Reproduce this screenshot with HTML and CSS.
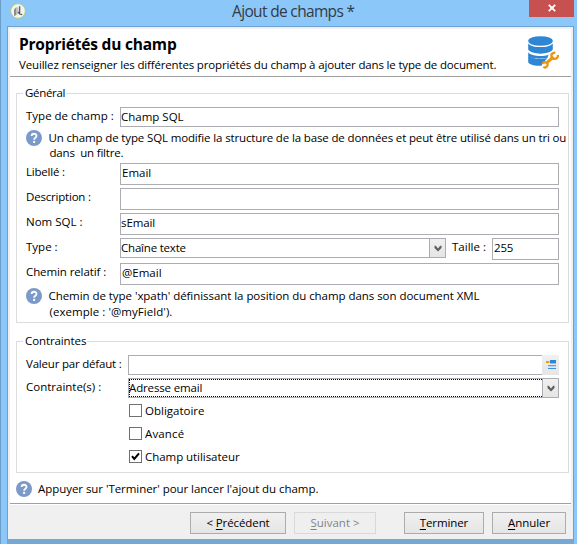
FILE: index.html
```html
<!DOCTYPE html>
<html lang="fr">
<head>
<meta charset="utf-8">
<title>Ajout de champs</title>
<link rel="stylesheet" href="styles.css">
</head>
<body>
<svg width="0" height="0" class="defs">
  <symbol id="help" viewBox="0 0 16 16">
    <circle cx="8" cy="8" r="8" fill="#7b9aca"/>
    <path d="M5.6 6.1C5.6 3 10.5 3 10.5 5.9C10.5 7.7 8.1 7.7 8.1 9.7" fill="none" stroke="#fff" stroke-width="1.8"/>
    <rect x="7.1" y="10.9" width="2" height="2" fill="#fff"/>
  </symbol>
  <symbol id="chevron" viewBox="0 0 8 7">
    <path d="M0.5 0.8H1.8L4 3.4L6.2 0.8H7.5V3L4 6.4L0.5 3Z" fill="#606060"/>
  </symbol>
</svg>
<div class="window">
  <div class="titlebar">
    <svg class="app-icon" viewBox="0 0 16 16">
      <circle cx="8" cy="8" r="7.4" fill="#f2f4f1" stroke="#a9c97e" stroke-width="1"/>
      <path d="M4 6.5L6.5 4V12L4 13Z" fill="#8b8d8b"/>
      <path d="M6.5 5L8.5 4V9L7 12Z" fill="#c2c4c2"/>
      <path d="M9.7 3.2V10.2M8 9L9.7 11L12.2 11.6" fill="none" stroke="#555" stroke-width="1.2"/>
    </svg>
    <h1 class="title">Ajout de champs *</h1>
    <div class="close"><svg viewBox="0 0 8 8"><path d="M0.8 0.8L7.2 7.2M7.2 0.8L0.8 7.2" stroke="#fff" stroke-width="1.8"/></svg></div>
  </div>
  <div class="client">
    <div class="page">
      <header class="header">
        <div>
          <h2>Propriétés du champ</h2>
          <p class="intro">Veuillez renseigner les différentes propriétés du champ à ajouter dans le type de document.</p>
        </div>
        <svg class="db-icon" viewBox="0 0 31 33">
          <g fill="#2f86d3">
            <ellipse cx="12.5" cy="5" rx="12.3" ry="4.8"/>
            <path d="M0.2 7.4C3.5 12.3 21.5 12.3 24.8 7.4V13.6C21.5 19 3.5 19 0.2 13.6Z"/>
            <path d="M0.2 16.2C3.5 21.3 21.5 21.3 24.8 16.2V17C21 17.5 19.5 20 20 21.5C14 23.5 3 23 0.2 19.6Z"/>
            <path d="M0.2 19C4 23 12 23.8 19.5 22L14 28.2V29.5C8 30.2 1.5 29 0.2 26.2Z"/>
          </g>
          <path d="M0.2 16.2" />
          <path d="M19 26.5L25.5 20.8" stroke="#ef950f" stroke-width="3"/>
          <path d="M27.4 16.6C23 16.2 21.8 22.2 26 22.8C28.8 23 30.2 21.4 29.8 19" fill="none" stroke="#ef950f" stroke-width="2.3"/>
          <path d="M14.4 27.8C16.2 25.2 20 26.2 19.6 29C19.2 31.6 16.6 32 15.4 30.8" fill="none" stroke="#ef950f" stroke-width="2.3"/>
        </svg>
      </header>
      <main class="content">
        <section class="group general">
          <h3 class="legend t-n3">Général</h3>
          <div class="row short first"><label class="label">Type de champ :</label><div class="field">Champ SQL</div></div>
          <div class="hint">
            <svg class="help"><use href="#help"/></svg>
            <p class="t-n14">Un champ de type SQL modifie la structure de la base de données et peut être utilisé dans un tri ou<br><span class="l2 t-n2">dans &nbsp;un filtre.</span></p>
          </div>
          <div class="row"><label class="label t-n2">Libellé :</label><div class="field pad">Email</div></div>
          <div class="row"><label class="label t-n2">Description :</label><div class="field pad"></div></div>
          <div class="row"><label class="label">Nom SQL :</label><div class="field t-n1">sEmail</div></div>
          <div class="row">
            <label class="label">Type :</label>
            <div class="field combo t-n2"><span>Chaîne texte</span><span class="drop"><svg><use href="#chevron"/></svg></span></div>
            <label class="size-label">Taille :</label>
            <div class="field size t-n2">255</div>
          </div>
          <div class="row"><label class="label t-n1">Chemin relatif :</label><div class="field pad">@Email</div></div>
          <div class="hint tall">
            <svg class="help"><use href="#help"/></svg>
            <p class="t-n05">Chemin de type 'xpath' définissant la position du champ dans son document XML<br><span class="l2 t-0">(exemple : '@myField').</span></p>
          </div>
        </section>
        <section class="group constraints">
          <h3 class="legend t-n1">Contraintes</h3>
          <div class="row short first"><label class="label t-n2">Valeur par défaut :</label><div class="field open"></div>
            <span class="picker"><svg viewBox="0 0 10 9"><path d="M4 0H10V3H4Z" fill="#2f86d3"/><path d="M4 3H10V4H4Z" fill="#8dbdf0"/><path d="M2 5H10V6H2Z" fill="#5aa2e6"/><path d="M2 6H10V7H2Z" fill="#b5d6f6"/><path d="M2 8H10V9H2Z" fill="#3f8fd4"/><path d="M0 1H3V3H0Z" fill="#f09a10"/><path d="M3 1H4V3H3Z" fill="#f8cf8c"/></svg></span></div>
          <div class="row short"><label class="label">Contrainte(s) :</label>
            <div class="field combo focus t-n14"><span class="sel">Adresse email</span><span class="drop"><svg><use href="#chevron"/></svg></span></div></div>
          <div class="checks">
            <label class="check"><span class="box"></span><span>Obligatoire</span></label>
            <label class="check"><span class="box"></span><span class="t-p15">Avancé</span></label>
            <label class="check"><span class="box"><svg viewBox="0 0 11 11"><path d="M2 5.2L4.3 8L9 2.4" fill="none" stroke="#000" stroke-width="2"/></svg></span><span class="t-n05">Champ utilisateur</span></label>
          </div>
        </section>
        <div class="hint status">
          <svg class="help"><use href="#help"/></svg>
          <p class="t-n05">Appuyer sur 'Terminer' pour lancer l'ajout du champ.</p>
        </div>
      </main>
    </div>
    <footer class="footer">
      <div class="btn prev t-n1">&lt;&nbsp;<u>P</u>récédent</div>
      <div class="btn next"><u>S</u>uivant&nbsp;&gt;</div>
      <div class="btn finish t-n1"><u>T</u>erminer</div>
      <div class="btn cancel t-n05"><u>A</u>nnuler</div>
    </footer>
  </div>
</div>
</body>
</html>
```
FILE: styles.css
```css
* { box-sizing: border-box; }
body, h1, h2, h3, p { margin: 0; font-weight: normal; }
body {
  width: 577px;
  height: 544px;
  overflow: hidden;
  font: 11.5px/15px "Open Sans", "Noto Sans", sans-serif;
  color: #000;
}
.defs { position: absolute; }
svg { display: block; flex: none; }

.window {
  width: 577px;
  height: 544px;
  background: #8cc7fa;
  border-left: 1px solid #6b9dcb;
  display: flex;
  flex-direction: column;
}
.titlebar {
  height: 26px;
  flex: none;
  display: flex;
  align-items: flex-start;
}
.app-icon { width: 16px; height: 16px; margin: 3px 0 0 9px; }
.title {
  flex: 1;
  padding-left: 206px;
  font-size: 15.5px;
  line-height: 23px;
  letter-spacing: -0.66px;
  color: #333b44;
}
.close {
  width: 45px;
  height: 17px;
  margin-right: 3px;
  background: #c75050;
  display: flex;
  justify-content: center;
  align-items: center;
}
.close svg { width: 8px; height: 8px; margin-top: -1px; }

.client {
  width: 567px;
  height: 518px;
  margin-left: 6px;
  border: solid #6fa1d0;
  border-width: 1px 1px 0;
  border-bottom: 5px solid #75a9d4;
  background: #f0f0f0;
  display: flex;
  flex-direction: column;
}
.page {
  height: 478px;
  margin: 0 2px;
  background: #fff;
  border-top: 2px solid #f0eff0;
  border-bottom: 1px solid #fff;
}
.header {
  height: 48px;
  border-bottom: 1px solid #a0a0a0;
  display: flex;
  justify-content: space-between;
  padding: 5px 12px 0 9px;
}
h2 { font-size: 15.5px; font-weight: bold; line-height: 20px; letter-spacing: -0.2px; }
.intro { letter-spacing: -0.16px; margin-top: 3px; }
.db-icon { width: 31px; height: 33px; margin-top: 2px; }

.content { height: 427px; padding: 16px 2px 0 6px; border-bottom: 1px solid #a0a0a0; }
.group { border: 1px solid #dcdcdc; padding: 0 9px; }
.general { height: 230px; }
.constraints { height: 132px; margin-top: 18px; }
.legend {
  width: max-content;
  height: 14px;
  font-size: 11.5px;
  line-height: 14px;
  margin: -8px 0 0 -3px;
  padding: 0 1px 0 2px;
  background: #fff;
}
.row { width: 533px; height: 22px; margin-top: 3px; display: flex; align-items: flex-start; }
.row.short { height: 20px; }
.row.first { margin-top: 7px; }
.label { width: 94px; flex: none; line-height: 18px; white-space: nowrap; }
.constraints .label { width: 102px; }
.field {
  flex: 1;
  align-self: stretch;
  border: 1px solid #abadb3;
  background: #fff;
  line-height: 18px;
  white-space: nowrap;
}
.field.pad { padding-left: 1px; }
.field.open { border-right: 0; }
.combo { height: 20px; display: flex; justify-content: space-between; align-self: flex-start; }
.drop {
  width: 17px;
  height: 20px;
  margin: -1px;
  border: 1px solid #abadb3;
  background: linear-gradient(#f0f0f0, #e5e5e5);
  display: flex;
  justify-content: center;
  align-items: center;
}
.drop svg { width: 8px; height: 7px; }
.sel {
  flex: 1;
  border: 1px dotted #000;
  border-right: 0;
  line-height: 16px;
  text-indent: -1px;
}
.focus .drop { margin-left: 0; }
.size-label { width: 46px; padding-left: 6px; line-height: 18px; }
.size { flex: none; width: 67px; padding-left: 1px; }
.picker {
  width: 17px;
  height: 20px;
  background: linear-gradient(#f0f0f0, #e5e5e5);
  display: flex;
  justify-content: center;
  align-items: center;
}
.picker svg { width: 10px; height: 9px; margin: -1px 0 0 0; }

.hint { display: flex; margin-top: 3px; height: 30px; white-space: nowrap; }
.hint p { padding-left: 6.5px; }
.hint.tall p { line-height: 16px; }
.help { width: 16px; height: 16px; }
.l2 { padding-left: 1px; }
.status { margin-top: 8px; height: 16px; }
.status p { padding-left: 6px; line-height: 15px; }

.checks { padding: 6px 0 0 103px; display: flex; flex-direction: column; gap: 10px; }
.check { display: flex; height: 13px; line-height: 13px; gap: 3px; }
.box { width: 13px; height: 13px; border: 1px solid #707070; background: #fff; }
.box svg { width: 11px; height: 11px; }

.footer {
  height: 34px;
  display: flex;
  align-items: flex-start;
  padding: 7px 0 0 182px;
}
.btn {
  height: 22px;
  border: 1px solid #acacac;
  background: linear-gradient(#f0f0f0, #e5e5e5);
  line-height: 19px;
  text-align: center;
}
.prev { width: 96px; }
.next { width: 82px; margin-left: 8px; color: #838383; border-color: #d9d9d9; background: #efefef; }
.finish { width: 80px; margin-left: 28px; }
.cancel { width: 74px; margin-left: 8px; }
u { text-underline-offset: 2px; }

.t-n3 { letter-spacing: -0.33px; }
.t-n2 { letter-spacing: -0.2px; }
.t-n14 { letter-spacing: -0.14px; }
.t-n1 { letter-spacing: -0.1px; }
.t-n05 { letter-spacing: -0.05px; }
.t-0 { letter-spacing: 0.05px; }
.t-p15 { letter-spacing: 0.15px; }
```
